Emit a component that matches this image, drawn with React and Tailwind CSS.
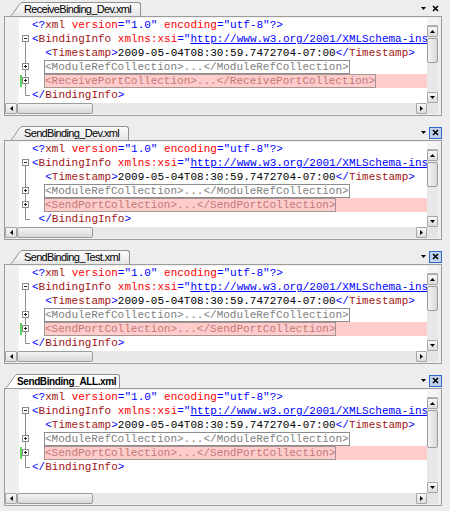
const mono = "font-['Liberation_Mono','Courier_New',monospace]";

const panels = [
  { name: "ReceiveBinding_Dev.xml", coll: "ReceivePortCollection", boxed: false, green: true, endPad: false, active: false, tall: false },
  { name: "SendBinding_Dev.xml", coll: "SendPortCollection", boxed: true, green: false, endPad: true, active: false, tall: false },
  { name: "SendBinding_Test.xml", coll: "SendPortCollection", boxed: true, green: true, endPad: false, active: false, tall: false },
  { name: "SendBinding_ALL.xml", coll: "SendPortCollection", boxed: true, green: true, endPad: false, active: true, tall: true },
];

const B = "text-[#0000ff]";
const E = "text-[#a31515]";
const A = "text-[#ff0000]";

function Gutter({ kind, green }) {
  return (
    <svg width="13" height="14" className="block shrink-0">
      {green && <rect x="1" y="1" width="2" height="12" fill="#5cd65c" />}
      {kind === "minus" && (
        <>
          <line x1="6.5" y1="10" x2="6.5" y2="14" stroke="#8a8a8a" />
          <rect x="3.5" y="3.5" width="6" height="6" fill="#fff" stroke="#8a8a8a" />
          <line x1="5" y1="6.5" x2="8" y2="6.5" stroke="#222" />
        </>
      )}
      {kind === "line" && <line x1="6.5" y1="0" x2="6.5" y2="14" stroke="#8a8a8a" />}
      {kind === "plus" && (
        <>
          <line x1="6.5" y1="0" x2="6.5" y2="14" stroke="#8a8a8a" />
          <rect x="3.5" y="3.5" width="6" height="6" fill="#fff" stroke="#8a8a8a" />
          <line x1="5" y1="6.5" x2="8" y2="6.5" stroke="#222" />
          <line x1="6.5" y1="5" x2="6.5" y2="8" stroke="#222" />
        </>
      )}
      {kind === "end" && <path d="M6.5 0V7.5H11" stroke="#8a8a8a" fill="none" />}
    </svg>
  );
}

function Row({ kind, green, children }) {
  return (
    <div className="flex h-[14px]">
      <Gutter kind={kind} green={green} />
      <div className="flex min-w-0 flex-1 overflow-hidden whitespace-pre">{children}</div>
    </div>
  );
}

function Code({ p }) {
  return (
    <div className={`${mono} text-[11px] leading-[14px]`}>
      <Row>
        <span>
          <span className={B}>&lt;?</span>
          <span className={E}>xml</span> <span className={A}>version</span>
          <span className={B}>="1.0"</span> <span className={A}>encoding</span>
          <span className={B}>="utf-8"?&gt;</span>
        </span>
      </Row>
      <Row kind="minus">
        <span>
          <span className={B}>&lt;</span>
          <span className={E}>BindingInfo</span> <span className={A}>xmlns:xsi</span>
          <span className={B}>="</span>
          <span className={`${B} underline`}>http://www.w3.org/2001/XMLSchema-ins</span>
        </span>
      </Row>
      <Row kind="line">
        <span>
          {"  "}
          <span className={B}>&lt;</span>
          <span className={E}>Timestamp</span>
          <span className={B}>&gt;</span>
          <span className="text-black">2009-05-04T08:30:59.7472704-07:00</span>
          <span className={B}>&lt;/</span>
          <span className={E}>Timestamp</span>
          <span className={B}>&gt;</span>
        </span>
      </Row>
      <Row kind="plus">
        <span className="w-[12px] shrink-0" />
        <span className="h-[14px] border border-[#8c8c8c] leading-[12px] text-[#808080]">
          &lt;ModuleRefCollection&gt;...&lt;/ModuleRefCollection&gt;
        </span>
      </Row>
      <Row kind="plus" green={p.green}>
        <span className="w-[12px] shrink-0" />
        <div className="flex flex-1 bg-[#ffcccc]">
          <span className="h-[14px] border border-[#a89494] leading-[12px] text-[#c07878]">
            &lt;{p.coll}&gt;...&lt;/{p.coll}&gt;
          </span>
        </div>
      </Row>
      <Row kind="end">
        <span>
          {p.endPad ? " " : ""}
          <span className={B}>&lt;/</span>
          <span className={E}>BindingInfo</span>
          <span className={B}>&gt;</span>
        </span>
      </Row>
    </div>
  );
}

function Btn({ className, children }) {
  return (
    <div
      className={
        "flex shrink-0 items-center justify-center rounded-[1px] border border-[#a6a6a6] bg-gradient-to-b from-[#f8f8f8] to-[#dcdcdc] " +
        className
      }
    >
      {children}
    </div>
  );
}

function VScroll({ tall }) {
  return (
    <div className="flex w-[11px] shrink-0 flex-col bg-[#e8e8e8]">
      <div className="h-[8px] border-b border-[#b4b4b4] bg-[#f3f3f3]" />
      <Btn className="h-[11px]">
        <svg width="5" height="3" className="block">
          <path d="M0 3L2.5 0L5 3Z" fill="#000" />
        </svg>
      </Btn>
      <div
        className={
          "mt-[1px] rounded-[2px] border border-[#9c9c9c] bg-gradient-to-r from-[#f4f4f4] to-[#d8d8d8] " +
          (tall ? "h-[38px]" : "h-[25px]")
        }
      />
      <div className="flex-1" />
      <Btn className="h-[11px]">
        <svg width="5" height="3" className="block">
          <path d="M0 0H5L2.5 3Z" fill="#000" />
        </svg>
      </Btn>
    </div>
  );
}

function HScroll() {
  return (
    <div className="flex h-[11px]">
      <div className="flex flex-1 bg-[#e8e8e8]">
        <Btn className="w-[12px]">
          <svg width="3" height="5" className="block">
            <path d="M3 0V5L0 2.5Z" fill="#000" />
          </svg>
        </Btn>
        <div className="w-[76px] rounded-[2px] border border-[#9c9c9c] bg-gradient-to-b from-[#f4f4f4] to-[#d8d8d8]" />
        <div className="flex-1" />
        <Btn className="w-[11px]">
          <svg width="3" height="5" className="block">
            <path d="M0 0V5L3 2.5Z" fill="#000" />
          </svg>
        </Btn>
      </div>
      <div className="w-[11px] bg-[#e4e4e4]" />
    </div>
  );
}

function Tab({ p, i }) {
  const id = "tabg" + i;
  return (
    <div className={"flex h-[14px] " + (p.active ? "ml-[5px]" : "ml-[10px]")}>
      <svg width="12" height="14" className="block shrink-0">
        <defs>
          <linearGradient id={id} x1="0" y1="0" x2="0" y2="1">
            <stop offset="0" stopColor={p.active ? "#ffffff" : "#fcfcfc"} />
            <stop offset="1" stopColor={p.active ? "#ffffff" : "#e6e6e6"} />
          </linearGradient>
        </defs>
        <path d="M0 14C4 12 8 2 12 0.5V14Z" fill={`url(#${id})`} />
        <path d="M0.5 14C4 12 8 2 12 0.5" stroke="#8f8f8f" fill="none" />
      </svg>
      <div
        className={
          "flex items-center rounded-tr-[3px] border-t border-r border-[#8f8f8f] font-['Liberation_Sans',Arial,sans-serif] text-black " +
          (p.active
            ? "bg-white pl-[0px] pr-[3px] text-[10px] font-bold tracking-[-0.4px]"
            : "bg-gradient-to-b from-[#fcfcfc] to-[#e6e6e6] pl-[2px] pr-[9px] text-[11px] tracking-[-0.65px]")
        }
      >
        {p.name}
      </div>
    </div>
  );
}

function Panel({ p, i }) {
  return (
    <div className={p.tall ? "" : "mb-[9px]"}>
      <div className="flex h-[15px] items-end">
        <Tab p={p} i={i} />
        <div className="mr-[8px] ml-auto flex items-center gap-[3px] self-center">
          <svg width="5" height="3" className="block">
            <path d="M0 0H5L2.5 3Z" fill="#000" />
          </svg>
          <div
            className={
              "flex h-[12px] w-[13px] items-center justify-center border " +
              (p.boxed ? "border-[#316ac5] bg-[#c1d2ee]" : "border-transparent")
            }
          >
            <svg width="7" height="7" className="block">
              <path d="M1 1L6 6M6 1L1 6" stroke="#000" strokeWidth="1.6" />
            </svg>
          </div>
        </div>
      </div>
      <div className="mr-[8px] ml-[4px] border border-[#9d9d9d] bg-[#efefef] pt-[1px] pr-[3px] pb-[1px]">
        <div className={"flex " + (p.tall ? "h-[103px]" : "h-[85px]")}>
          <div className="w-[14px] shrink-0" />
          <div className="min-w-0 flex-1 overflow-hidden bg-white">
            <Code p={p} />
          </div>
          <VScroll tall={p.tall} />
        </div>
        <HScroll />
      </div>
    </div>
  );
}

export default function App() {
  return (
    <div className="h-[511px] w-[450px] overflow-hidden bg-[#ededed] pt-[1px]">
      {panels.map((p, i) => (
        <Panel key={p.name} p={p} i={i} />
      ))}
    </div>
  );
}
